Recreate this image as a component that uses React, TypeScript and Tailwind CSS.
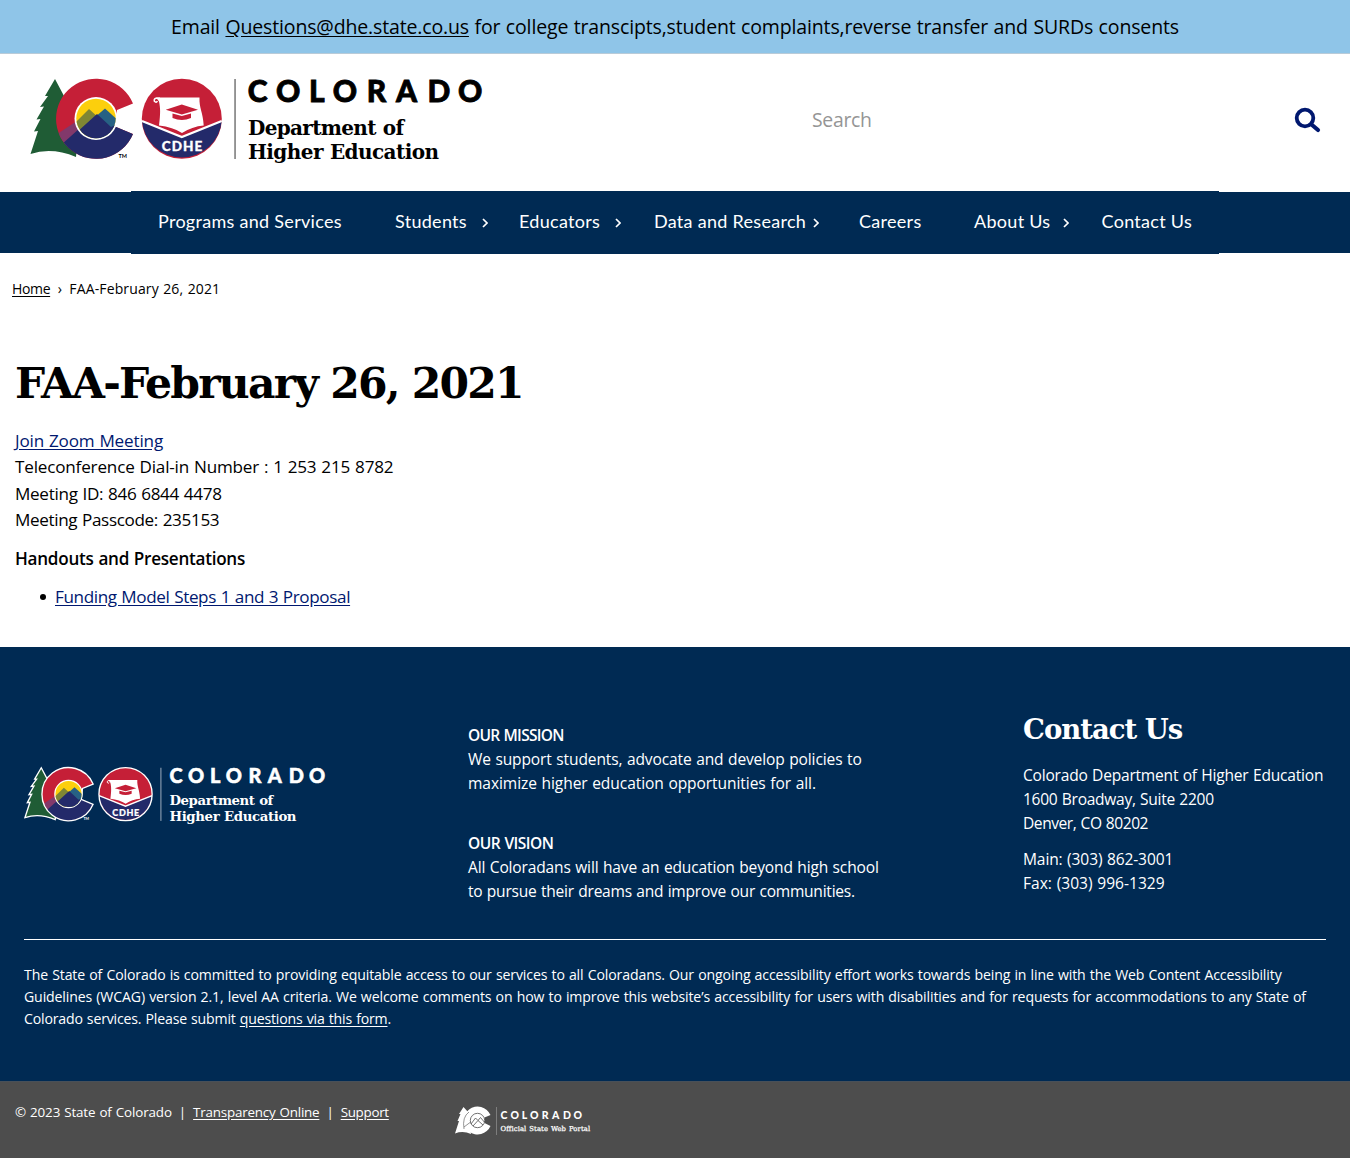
import type { ReactNode } from "react";

const SLAB = "'DejaVu Serif', serif";

function Emblem({ outlined = false }: { outlined?: boolean }) {
  const line = outlined ? "#fff" : "none";
  const ink = outlined ? "#fff" : "#000";
  const lettersX = [247.8, 276, 309, 332.8, 366.8, 396, 427.6, 458];
  return (
    <>
      <path
        d="M55 79 L45 96 L48 96 L40 107 L44 106.500 L36.500 119.500 L40.500 119 L34 131.500 L38 131 L30.500 154 Q52 147 76 157 L80 110 L64 96 Z"
        fill="#1f5c35"
        stroke={line}
        strokeWidth="2"
      />
      <clipPath id={outlined ? "cShapeB" : "cShapeA"}>
        <path d="M133 103.500 A40 40 0 1 0 133 134 L115 126.500 L117 110 Z" />
      </clipPath>
      <g clipPath={outlined ? "url(#cShapeB)" : "url(#cShapeA)"}>
        <rect x="54" y="77" width="84" height="84" fill="#c51f37" />
        <path d="M54 136 L80 119 L80 150 L60 146 Z" fill="#82396b" />
        <path d="M61 145 L80 128 L112 128 L116 126 L138 136 V162 H66 Z" fill="#232a6a" />
      </g>
      {outlined && (
        <path d="M133 103.500 A40 40 0 1 0 133 134 L115 126.500 L117 110 Z" fill="none" stroke="#fff" strokeWidth="2" />
      )}
      <circle cx="96" cy="118.500" r="21.500" fill="#fff" />
      <clipPath id={outlined ? "discB" : "discA"}>
        <circle cx="96" cy="118.500" r="19.700" />
      </clipPath>
      <g clipPath={outlined ? "url(#discB)" : "url(#discA)"}>
        <rect x="74" y="97" width="44" height="44" fill="#fccf0c" />
        <path d="M72 126 L89 109 L99 118 L90 142 H72 Z" fill="#7f8634" />
        <path d="M94 118 L105 108.500 L120 122 V142 H94 Z" fill="#276184" />
        <path d="M76 133 L97 114 L111 127 L118 124 V142 H76 Z" fill="#232a6a" />
      </g>
      <text x="118.500" y="158" fontFamily="Lato, sans-serif" fontSize="5.500" fontWeight="700" fill={ink}>TM</text>
      <circle cx="181.800" cy="118.700" r="40" fill="#c51f37" />
      <path d="M142 121 L181.800 137.500 L221.700 121 A40 40 0 0 1 142 121 Z" fill="#232a6a" />
      <path d="M142 121 L181.800 137 L221.700 121" fill="none" stroke="#fff" strokeWidth="2.200" />
      {outlined && <circle cx="181.800" cy="118.700" r="40" fill="none" stroke="#fff" strokeWidth="2" />}
      <path
        d="M156 97.500 H199.500 C199 108 203 112 203.700 125.500 Q192 126.500 182 133 Q173 127 159 125.500 C160.500 114 160.500 108 159 101.500 Z"
        fill="#fff"
      />
      <path d="M160 98.300 H156 Q153.700 99 154.400 101.300 Q156.300 103.300 157.400 101" fill="none" stroke="#fff" strokeWidth="1.500" />
      <path d="M181.800 104.500 L198 109.700 L181.800 114.500 L165.700 109.700 Z" fill="#c51f37" />
      <path d="M172.500 113.500 L181.800 116 L191 113.500 V118 Q182 122 172.500 118 Z" fill="#c51f37" />
      <text x="161.800" y="151" fontFamily="Lato, sans-serif" fontSize="13.500" fontWeight="900" fill="#fff" stroke="#fff" strokeWidth=".3" textLength="40.500">CDHE</text>
      <rect x="234.300" y="79" width="1.500" height="80" fill={outlined ? "#9dacbd" : "#777"} />
      <text x={lettersX.join(" ")} y="101.500" fontFamily="Lato, sans-serif" fontSize="30" fontWeight="900" fill={ink} stroke={ink} strokeWidth=".8">COLORADO</text>
      <text x="248" y="134.800" fontFamily={SLAB} fontSize="20" fontWeight="700" fill={ink} textLength="156">Department of</text>
      <text x="248" y="158.500" fontFamily={SLAB} fontSize="20" fontWeight="700" fill={ink} textLength="191">Higher Education</text>
    </>
  );
}

function PortalLogo() {
  return (
    <svg width="140" height="34" viewBox="453 1103 140 34" className="block">
      <path d="M463.500 1107 L459 1114 L460.500 1114 L457.500 1121 L459 1121 L455 1133.500 Q463 1130.500 471 1134 L468 1112 Z" fill="#fff" />
      <path d="M490.500 1115 A14 14 0 1 0 490.500 1126 L484.500 1123 L484.500 1117.500 Z" fill="#fff" />
      <path d="M469 1112 Q462 1117 464 1129 M464 1127 L472 1121" fill="none" stroke="#4d4d4d" strokeWidth=".6" />
      <circle cx="477.500" cy="1120.500" r="7.200" fill="#fff" stroke="#4d4d4d" strokeWidth=".8" />
      <path d="M471 1124 L475.500 1118 L478 1120.500 L480.500 1117.500 L484.300 1122 M473 1126 L478 1120.500 L483 1125" fill="none" stroke="#4d4d4d" strokeWidth=".8" />
      <path d="M496.500 1107 V1135" stroke="#8a8a8a" strokeWidth=".8" />
      <text x="500.500 510.500 521.700 530 541.700 552 563 573.500" y="1118.700" fontFamily="Lato, sans-serif" fontSize="10.500" fontWeight="900" fill="#fff">COLORADO</text>
      <text x="500.500" y="1130.700" fontFamily={SLAB} fontSize="6.800" fill="#fff" stroke="#fff" strokeWidth=".25" textLength="89.500">Official State Web Portal</text>
    </svg>
  );
}

function NavItem({ children, width, arrow }: { children: ReactNode; width: string; arrow?: string }) {
  return (
    <li className={`flex items-center shrink-0 ${width}`}>
      <a href="#" className="whitespace-nowrap">{children}</a>
      {arrow && (
        <svg viewBox="0 0 6 10" className={`h-[10px] w-[6px] mt-[3px] ${arrow}`}>
          <path d="M1 1 L5 5 L1 9" fill="none" stroke="#fff" strokeWidth="1.700" />
        </svg>
      )}
    </li>
  );
}

export default function App() {
  return (
    <div className="min-h-[1158px] w-[1350px] bg-white font-['Open_Sans','Noto_Sans',sans-serif] font-[450] text-black [word-spacing:0.04em]">
      <div className="flex h-[54px] items-center justify-center border-b border-[#b9cbd8] bg-[#8fc5e8] pt-px text-[19.5px] tracking-[-0.15px] whitespace-nowrap">
        <p>
          Email <a href="#" className="underline underline-offset-2">Questions@dhe.state.co.us</a> for college transcipts,student complaints,reverse transfer and SURDs consents
        </p>
      </div>

      <header className="flex h-[138px] items-start pt-[12px] pl-[26px]">
        <svg width="462" height="102" viewBox="26 66 462 102" className="block shrink-0">
          <Emblem />
        </svg>
        <div className="mt-2 ml-[324px] flex h-[92px] flex-1 items-center justify-between pr-[29px]">
          <span className="text-[19.4px] tracking-[-0.3px] text-[#959595]">Search</span>
          <svg width="27" height="26" viewBox="1294 107 27 26">
            <circle cx="1305" cy="118" r="8.300" fill="none" stroke="#00186f" strokeWidth="3.800" />
            <path d="M1311.500 124.500 L1318 130" stroke="#00186f" strokeWidth="4.200" strokeLinecap="round" />
          </svg>
        </div>
      </header>

      <nav className="h-[61px] bg-[#002a53]">
        <div className="relative -top-px mx-auto flex h-[63px] w-[1088px] bg-[#002a53] pb-[2px] pl-[27px]">
          <ul className="flex items-center font-['Lato',sans-serif] text-[18px] font-normal tracking-[0.29px] text-white [word-spacing:0]">
            <NavItem width="w-[237px]">Programs and Services</NavItem>
            <NavItem width="w-[124px]" arrow="ml-[15px]">Students</NavItem>
            <NavItem width="w-[135px]" arrow="ml-[15px]">Educators</NavItem>
            <NavItem width="w-[205px]" arrow="ml-[7px]">Data and Research</NavItem>
            <NavItem width="w-[115px]">Careers</NavItem>
            <NavItem width="w-[127.5px]" arrow="ml-[13px]">About Us</NavItem>
            <NavItem width="w-[92px]">Contact Us</NavItem>
          </ul>
        </div>
      </nav>

      <div className="flex h-[72px] items-center pb-[2px] pl-3 text-[14px]">
        <a href="#" className="tracking-[-0.36px] underline underline-offset-2">Home</a>
        <span className="mx-[7.5px]">›</span>
        <span className="tracking-[0.13px]">FAA-February 26, 2021</span>
      </div>

      <main className="h-[322px] pl-[15px] text-[17.1px] leading-[26.4px] tracking-[-0.16px]">
        <h1 className="pt-[28px] font-['DejaVu_Serif',serif] text-[42.5px] leading-[60px] font-bold tracking-[-1.8px] [word-spacing:0]">FAA-February 26, 2021</h1>
        <div className="mt-[15px]">
          <p><a href="#" className="text-[#00186f] underline underline-offset-2">Join Zoom Meeting</a></p>
          <p className="tracking-[-0.18px]">Teleconference Dial-in Number : 1 253 215 8782</p>
          <p className="tracking-[-0.3px]">Meeting ID: 846 6844 4478</p>
          <p className="tracking-[-0.35px]">Meeting Passcode: 235153</p>
        </div>
        <p className="mt-3 font-semibold tracking-[-0.26px]">Handouts and Presentations</p>
        <ul className="mt-3 pl-[25px] tracking-[-0.38px]">
          <li className="flex items-center">
            <span className="mr-[9px] size-[6px] rounded-full bg-black" />
            <a href="#" className="text-[#00186f] underline underline-offset-2">Funding Model Steps 1 and 3 Proposal</a>
          </li>
        </ul>
      </main>

      <footer>
        <div className="h-[434px] bg-[#002a53] px-6 text-white">
          <div className="flex h-[292px] text-[15.55px] leading-6 tracking-[-0.145px]">
            <div className="w-[444px] pt-[112px]">
              <svg width="307" height="68" viewBox="26 66 462 102" className="-ml-[2px] block">
                <Emblem outlined />
              </svg>
            </div>
            <div className="w-[555px] pt-[76px] whitespace-nowrap">
              <p className="font-semibold tracking-[-0.72px]">OUR MISSION</p>
              <p className="tracking-[-0.125px]">We support students, advocate and develop policies to<br /><span className="tracking-[-0.07px]">maximize higher education opportunities for all.</span></p>
              <p className="mt-9 font-semibold tracking-[-0.5px]">OUR VISION</p>
              <p className="tracking-[-0.155px]">All Coloradans will have an education beyond high school<br /><span className="tracking-[-0.24px]">to pursue their dreams and improve our communities.</span></p>
            </div>
            <div className="pt-[62px] whitespace-nowrap">
              <h2 className="font-['DejaVu_Serif',serif] text-[27.5px] leading-10 font-bold tracking-[-1px] [word-spacing:0]">Contact Us</h2>
              <p className="mt-[14px] tracking-[-0.21px]">Colorado Department of Higher Education<br /><span className="tracking-[-0.28px]">1600 Broadway, Suite 2200</span><br /><span className="tracking-[-0.44px]">Denver, CO 80202</span></p>
              <p className="mt-3 tracking-[-0.12px]">Main: (303) 862-3001<br /><span className="tracking-[0.02px]">Fax: (303) 996-1329</span></p>
            </div>
          </div>
          <div className="border-t border-white pt-6 text-[14.1px] leading-[22px] tracking-[-0.122px] whitespace-nowrap">
            <p>
              The State of Colorado is committed to providing equitable access to our services to all Coloradans. Our ongoing accessibility effort works towards being in line with the Web Content Accessibility<br />
              Guidelines (WCAG) version 2.1, level AA criteria. We welcome comments on how to improve this website’s accessibility for users with disabilities and for requests for accommodations to any State of<br />
              <span className="tracking-[-0.17px]">Colorado services. Please submit <a href="#" className="underline underline-offset-2">questions via this form</a>.</span>
            </p>
          </div>
        </div>
        <div className="flex h-[77px] items-start border-t border-[#485059] bg-[#4d4d4d] pl-[15px] text-[13.4px] leading-5 tracking-[-0.12px] text-white">
          <div className="flex w-[438px] pt-5">
            <span>© 2023 State of Colorado</span>
            <span className="mx-[7px]">|</span>
            <a href="#" className="tracking-[-0.2px] underline underline-offset-2">Transparency Online</a>
            <span className="mx-[7px]">|</span>
            <a href="#" className="tracking-[-0.3px] underline underline-offset-2">Support</a>
          </div>
          <div className="pt-[21px]"><PortalLogo /></div>
        </div>
      </footer>
    </div>
  );
}
